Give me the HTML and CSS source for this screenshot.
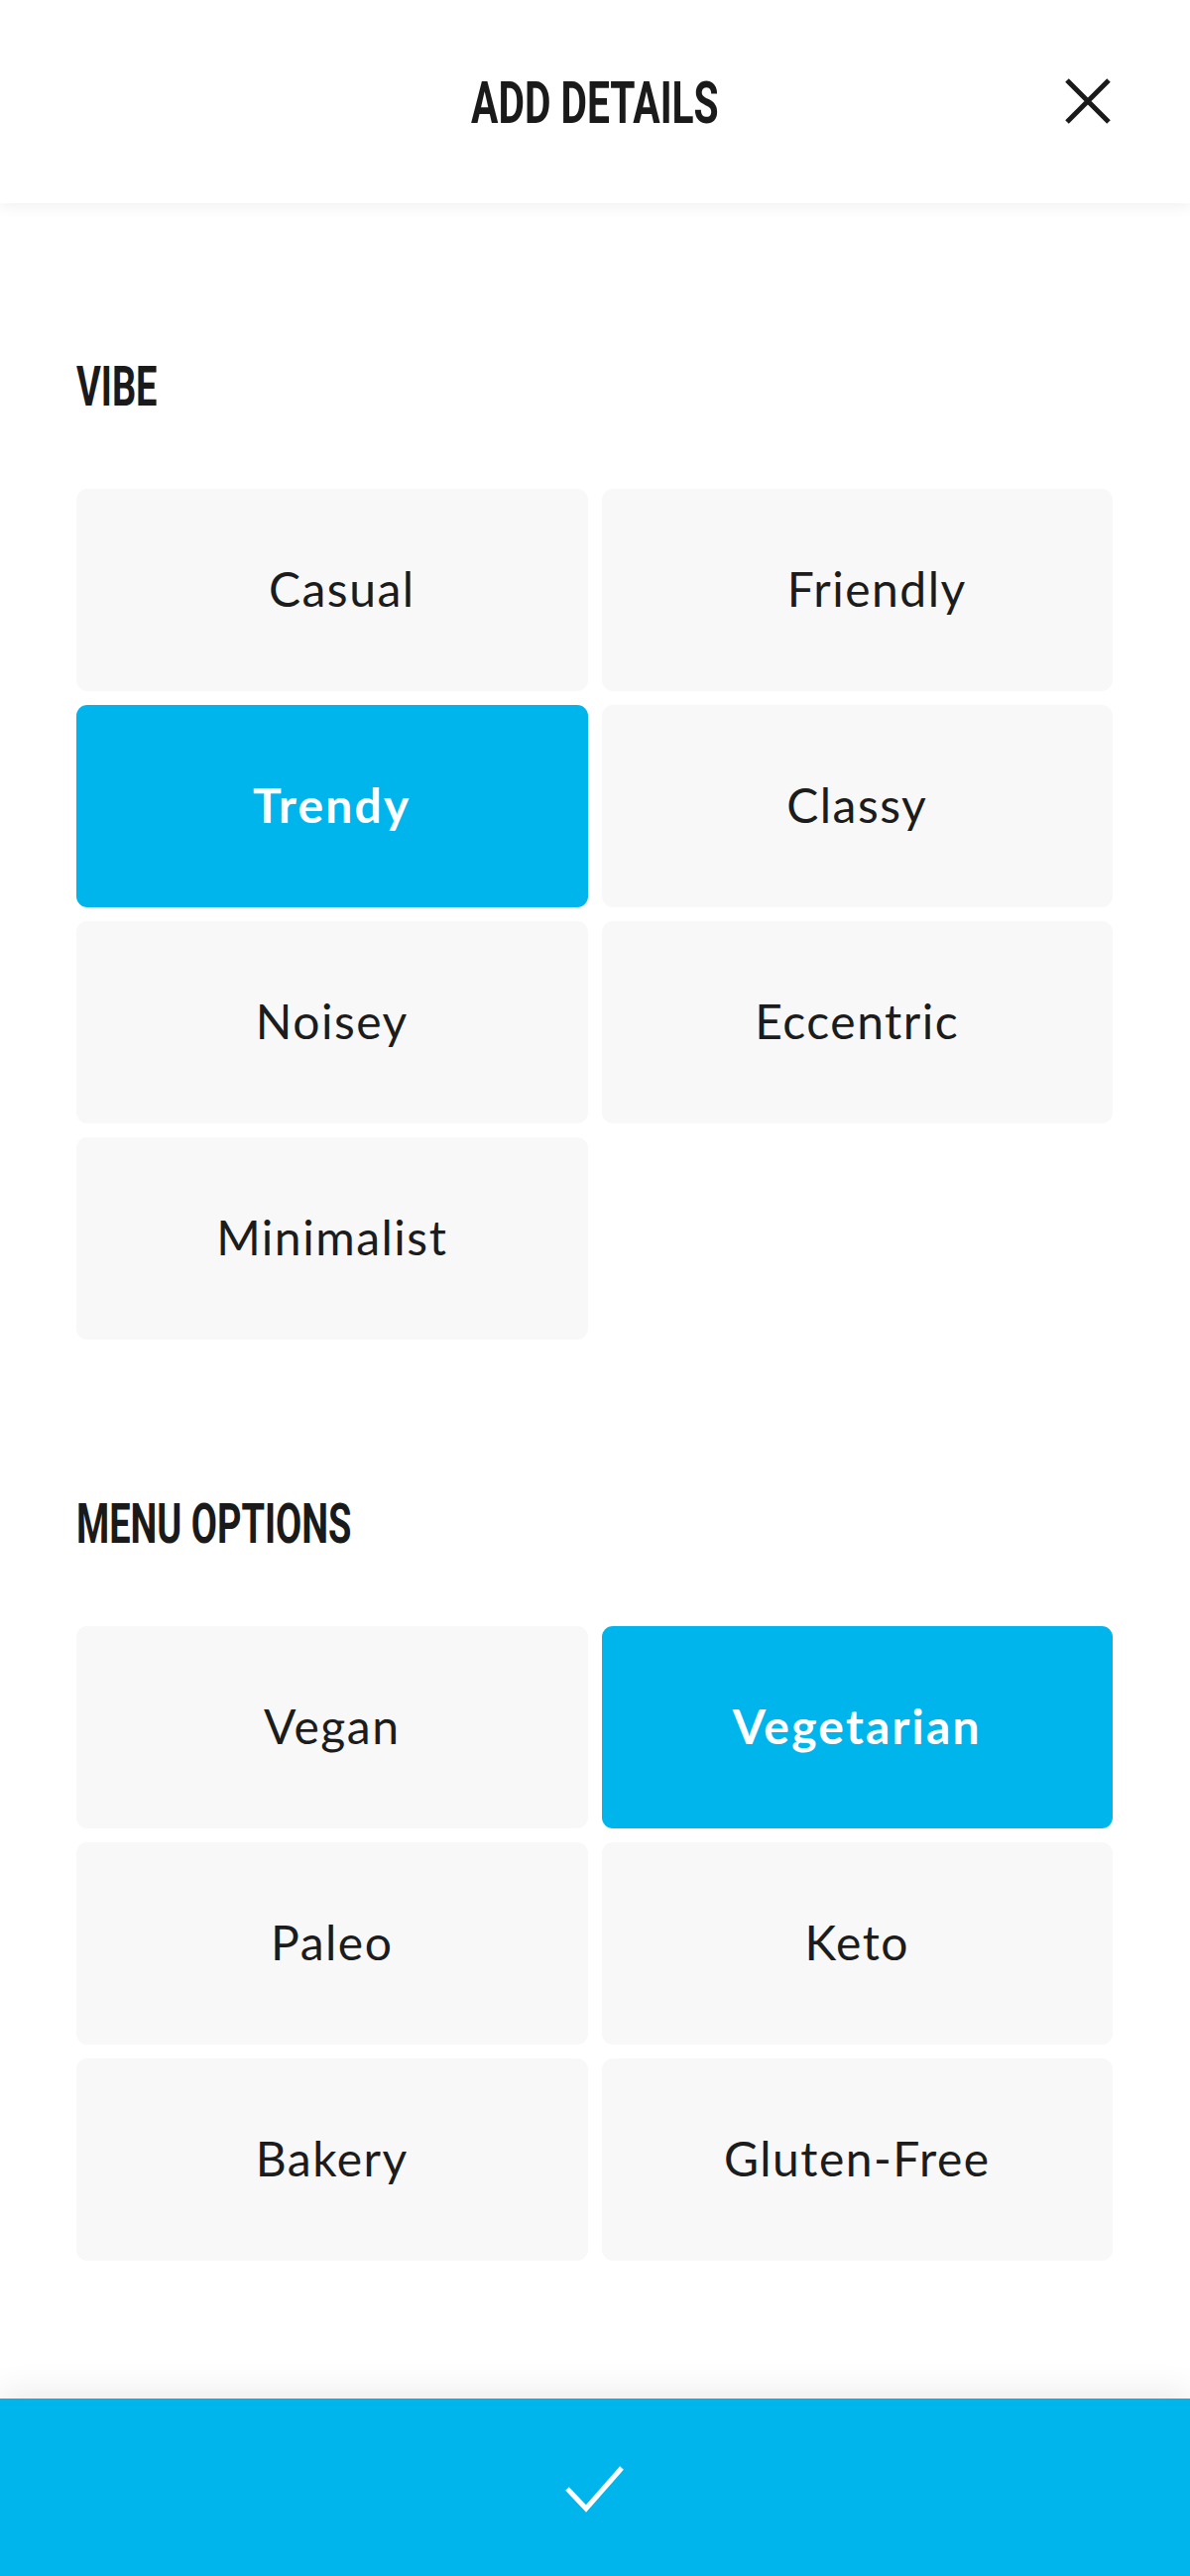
FILE: index.html
```html
<!DOCTYPE html>
<html lang="en">
<head>
<meta charset="utf-8">
<title>Add Details</title>
<link rel="stylesheet" href="styles.css">
</head>
<body>
<div class="screen">
  <header class="topbar">
    <h1 class="title"><span class="cond">ADD DETAILS</span></h1>
    <button class="close" aria-label="Close">
      <svg width="48" height="48" viewBox="0 0 48 48"><path d="M3 3 L45 45 M45 3 L3 45" stroke="#1a1a1a" stroke-width="5" fill="none"/></svg>
    </button>
  </header>

  <main class="content">
    <section class="section section-vibe">
      <h2 class="section-title"><span class="cond">VIBE</span></h2>
      <div class="options">
        <div class="opt opt-shift-s">Casual</div>
        <div class="opt opt-shift-l">Friendly</div>
        <div class="opt selected">Trendy</div>
        <div class="opt">Classy</div>
        <div class="opt">Noisey</div>
        <div class="opt">Eccentric</div>
        <div class="opt">Minimalist</div>
      </div>
    </section>

    <section class="section section-menu">
      <h2 class="section-title"><span class="cond">MENU OPTIONS</span></h2>
      <div class="options">
        <div class="opt">Vegan</div>
        <div class="opt selected">Vegetarian</div>
        <div class="opt">Paleo</div>
        <div class="opt">Keto</div>
        <div class="opt">Bakery</div>
        <div class="opt">Gluten-Free</div>
      </div>
    </section>
  </main>

  <footer class="confirm">
    <svg width="64" height="50" viewBox="0 0 64 50"><polyline points="4,26 23,46 59,5" stroke="#ffffff" stroke-width="5" fill="none" stroke-linejoin="miter"/></svg>
  </footer>
</div>
</body>
</html>
```

FILE: styles.css
```css
* { box-sizing: border-box; }

html, body {
  margin: 0;
  padding: 0;
  background: #ffffff;
}

.screen {
  position: relative;
  width: 1200px;
  height: 2598px;
  overflow: hidden;
  background: #ffffff;
  font-family: Lato, "Open Sans", sans-serif;
  color: #1c1c1c;
}

.cond {
  display: inline-block;
  font-family: Roboto, "Liberation Sans", sans-serif;
  font-weight: 700;
  transform: scaleX(0.69);
}

.topbar {
  position: relative;
  height: 205px;
  display: flex;
  align-items: center;
  justify-content: center;
  background: #ffffff;
  box-shadow: 0 4px 14px rgba(0, 0, 0, 0.06);
  z-index: 2;
}

.title {
  margin: 0;
  font-size: 59px;
  line-height: 1;
  font-weight: 700;
  color: #1a1a1a;
}

.title .cond { transform-origin: center; }

.close {
  position: absolute;
  right: 79px;
  top: 78px;
  width: 48px;
  height: 48px;
  padding: 0;
  border: 0;
  background: transparent;
}

.close svg { display: block; }

.content {
  padding: 0 78px 0 77px;
}

.section-vibe { padding-top: 156px; }
.section-menu { padding-top: 157px; }

.section-title {
  margin: 0;
  font-size: 55px;
  line-height: 55px;
  height: 55px;
  color: #1a1a1a;
}

.section-title .cond { transform-origin: left center; }

.options {
  margin-top: 77px;
  display: grid;
  grid-template-columns: 1fr 1fr;
  grid-auto-rows: 204px;
  column-gap: 14px;
  row-gap: 14px;
}

.opt {
  display: flex;
  align-items: center;
  justify-content: center;
  padding-bottom: 4px;
  background: #f8f8f8;
  border-radius: 11px;
  font-size: 48px;
  font-weight: 400;
  letter-spacing: 1.5px;
  color: #1c1c1c;
}

.opt-shift-s { padding-left: 20px; }
.opt-shift-l { padding-left: 40px; }

.opt.selected {
  background: #00b5eb;
  color: #ffffff;
  font-weight: 700;
  letter-spacing: 2.2px;
}

.confirm {
  position: absolute;
  left: 0;
  right: 0;
  bottom: 0;
  height: 179px;
  background: #00b5eb;
  display: flex;
  align-items: center;
  justify-content: center;
  box-shadow: 0 -10px 30px rgba(0, 0, 0, 0.07);
}

.confirm svg { display: block; }
```
